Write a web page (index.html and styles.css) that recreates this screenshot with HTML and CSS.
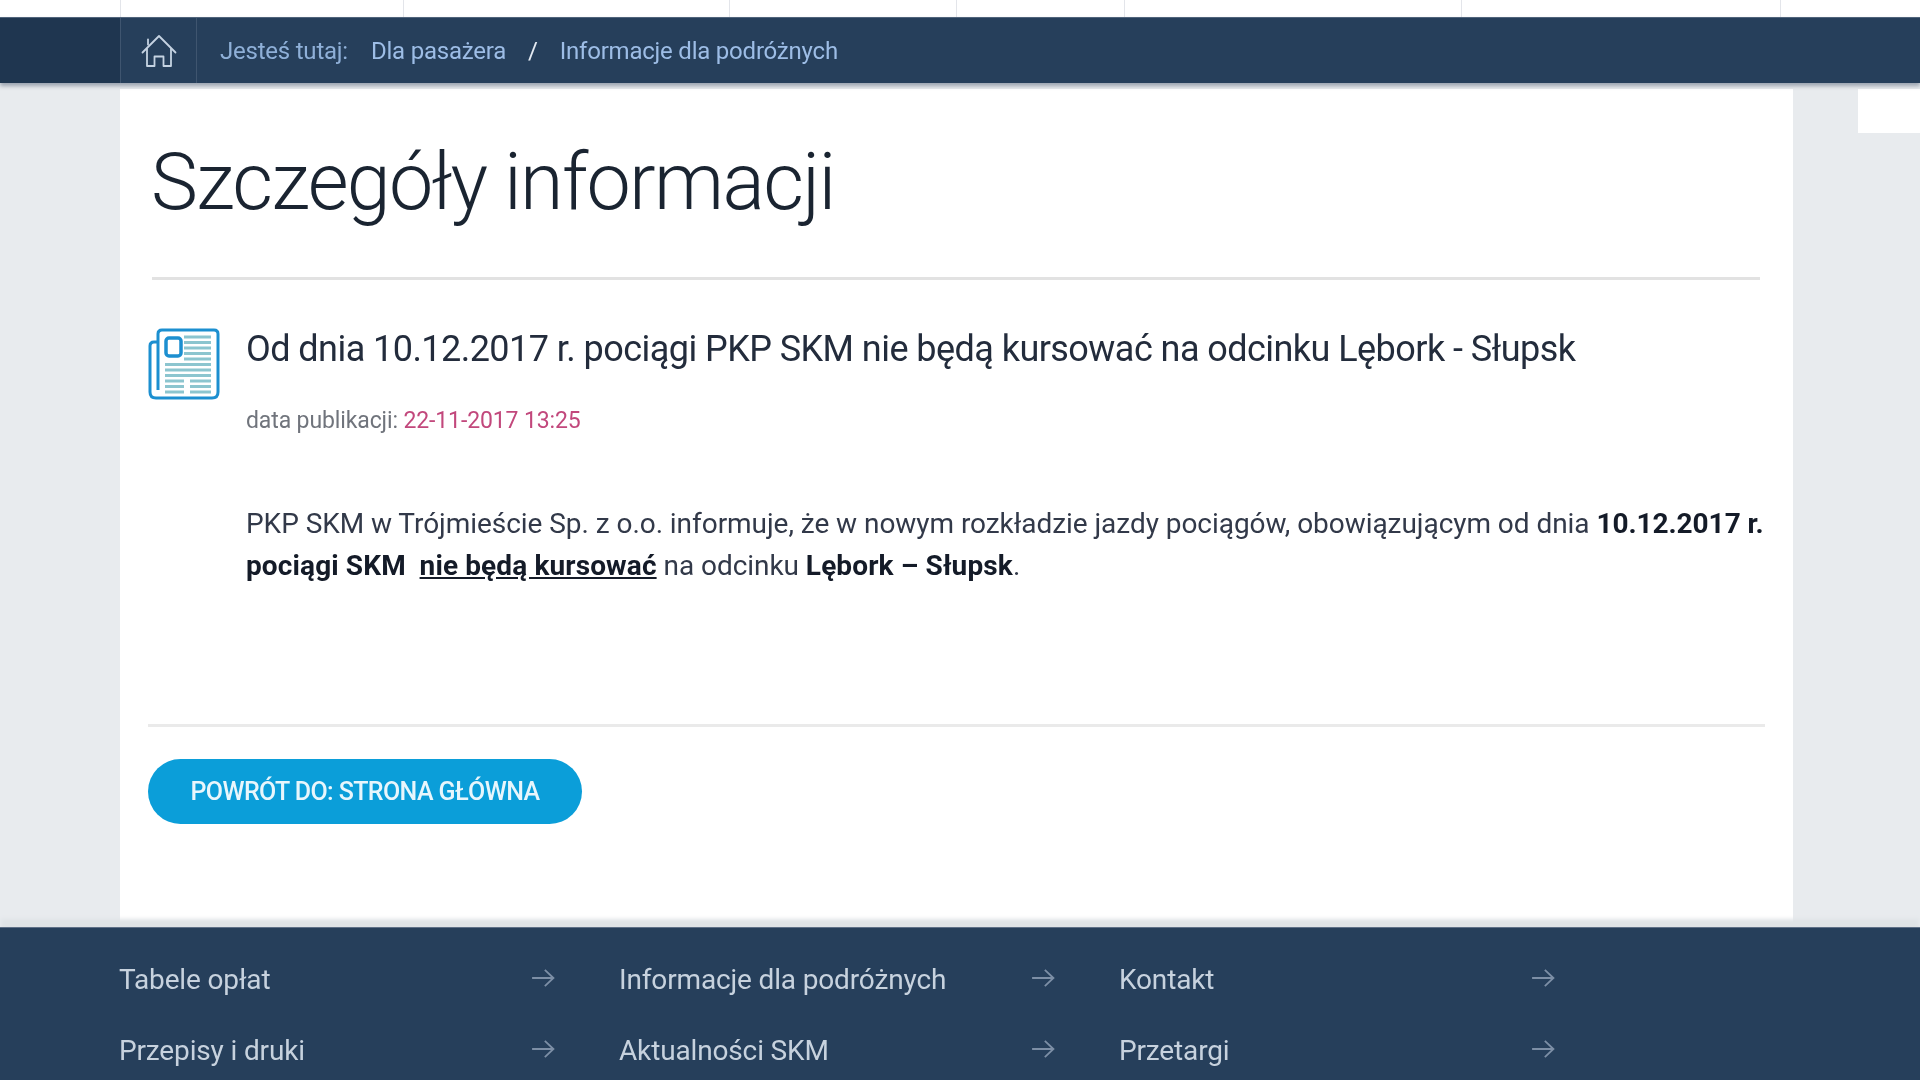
FILE: index.html
```html
<!DOCTYPE html>
<html lang="pl">
<head>
    <meta charset="UTF-8">
    <title>Szczegóły informacji</title>
    <link rel="stylesheet" href="styles.css">
</head>
<body>
    <svg class="defs" width="0" height="0">
        <symbol id="arrow" viewBox="0 0 26 22">
            <path d="M1 11 H24 M15 2 L24.500 11 L15 20" fill="none" stroke="#7d8fa6" stroke-width="2"/>
        </symbol>
    </svg>

    <div class="topbar">
        <span class="top-cell c1"></span>
        <span class="top-cell c2"></span>
        <span class="top-cell c3"></span>
        <span class="top-cell c4"></span>
        <span class="top-cell c5"></span>
        <span class="top-cell c6"></span>
        <span class="top-cell c7"></span>
    </div>

    <nav class="crumbs">
        <a class="home" href="#">
            <svg width="36" height="34" viewBox="0 0 36 34" fill="none" stroke="#c5d3e2" stroke-width="1.8" stroke-linejoin="round" stroke-linecap="round">
                <path d="M1.5 18.5 L18 2 L34.500 18.500"/>
                <path d="M7 5.500 V10.500"/>
                <path d="M6 15 V32 H13.500 V22.500 H22.500 V32 H30 V15"/>
            </svg>
        </a>
        <div class="crumb-text">
            <span class="here">Jesteś tutaj:</span>
            <a href="#">Dla pasażera</a>
            <span class="sep">/</span>
            <a href="#">Informacje dla podróżnych</a>
        </div>
    </nav>

    <div class="page">
        <main class="content">
            <h1>Szczegóły informacji</h1>
            <hr class="rule-top">

            <article class="info">
                <svg class="info-icon" width="72" height="72" viewBox="0 0 72 72" fill="none">
                    <g stroke="#8cc5cf" stroke-width="3.200">
                        <path d="M36 9 H63 M36 14.500 H63 M36 20 H63 M36 25.500 H63 M36 31 H63"/>
                        <path d="M17 36.500 H63 M17 42 H63 M17 47.500 H63"/>
                        <path d="M17 53 H36 M17 58.500 H36 M17 64 H36 M42 53 H63 M42 58.500 H63 M42 64 H63"/>
                    </g>
                    <path d="M10 14 H6 Q2 14 2 18 V64 Q2 70 8 70 H64 Q70 70 70 64 V6 Q70 2 66 2 H14 Q10 2 10 6 V62" stroke="#1c8fd0" stroke-width="3"/>
                    <rect x="18" y="10" width="15" height="18" rx="3" stroke="#1c8fd0" stroke-width="3.500"/>
                </svg>
                <div class="info-body">
                    <h2>Od dnia 10.12.2017 r. pociągi PKP SKM nie będą kursować na odcinku Lębork - Słupsk</h2>
                    <p class="published">data publikacji: <span class="date">22-11-2017 13:25</span></p>
                    <p class="text">PKP SKM w Trójmieście Sp. z o.o. informuje, że w nowym rozkładzie jazdy pociągów, obowiązującym od dnia <b>10.12.2017 r.</b> <b class="wide">pociągi SKM</b>&nbsp; <b class="wide under">nie będą kursować</b> na odcinku <b class="wide">Lębork – Słupsk</b>.</p>
                </div>
            </article>

            <hr class="rule-bottom">
            <a class="back" href="#">POWRÓT DO: STRONA GŁÓWNA</a>
        </main>
        <div class="side"><div class="side-box"></div></div>
    </div>

    <footer class="footer">
        <div class="links">
            <a href="#"><span>Tabele opłat</span><svg class="arr"><use href="#arrow"/></svg></a>
            <a href="#"><span>Informacje dla podróżnych</span><svg class="arr"><use href="#arrow"/></svg></a>
            <a href="#"><span>Kontakt</span><svg class="arr"><use href="#arrow"/></svg></a>
            <a href="#"><span>Przepisy i druki</span><svg class="arr"><use href="#arrow"/></svg></a>
            <a href="#"><span>Aktualności SKM</span><svg class="arr"><use href="#arrow"/></svg></a>
            <a href="#"><span>Przetargi</span><svg class="arr"><use href="#arrow"/></svg></a>
        </div>
    </footer>
</body>
</html>
```

FILE: styles.css
```css
html {
    height: 1080px;
    overflow: hidden;
    background-color: #e8ebee;
}
body {
    margin: 0 -4px; /* keeps the blur from fading at the window edges */
    padding: 0 4px;
    font-family: "Roboto", "Liberation Sans", sans-serif;
    color: #2a3344;
    filter: blur(.65px); /* the source capture is soft */
}

a {
    text-decoration: none;
    color: inherit;
}

.defs {
    display: block;
}

/* top strip */
.topbar {
    display: flex;
    height: 17px;
    background-color: #fff;
    padding-left: 120px;
}
.top-cell {
    border-left: 1px solid #e3e5ea;
    box-sizing: border-box;
}
.c1 { width: 283px; }
.c2 { width: 326px; }
.c3 { width: 227px; }
.c4 { width: 168px; }
.c5 { width: 337px; }
.c6 { width: 319px; }
.c7 { width: 140px; }

/* breadcrumb */
.crumbs {
    display: flex;
    align-items: center;
    height: 66px;
    background: linear-gradient(to right, #1f3650 120px, #263f5b 120px);
    border-top: 1px solid #50647b;
    box-shadow: 0 3px 4px rgba(60, 75, 100, .45);
    padding-left: 120px;
    position: relative;
    box-sizing: border-box;
}
.home {
    display: flex;
    align-items: center;
    justify-content: center;
    width: 77px;
    height: 100%;
    box-sizing: border-box;
    border-left: 1px solid #3f556f;
    border-right: 1px solid #3f556f;
}
.crumb-text {
    display: flex;
    align-items: center;
    margin-left: 23px;
    font-size: 24px;
    letter-spacing: -.22px;
    color: #9dbde6;
}
.here {
    color: #8fb0d8;
    margin-right: 23px;
}
.sep {
    color: #e4ebf3;
    margin: 0 22px;
}

/* main */
.page {
    display: flex;
    height: 844px;
    padding-left: 120px;
    padding-top: 6px;
    box-sizing: border-box;
}
.content {
    width: 1673px;
    height: 838px;
    background-color: #fff;
    padding: 0 28px;
    box-sizing: border-box;
}
.side {
    flex: 1;
    padding-left: 65px;
}
.side-box {
    height: 44px;
    background-color: #fff;
}

h1 {
    margin: 53px 0 0 3px;
    font-size: 79px;
    line-height: 80px;
    font-weight: 300;
    letter-spacing: -1.65px;
    color: #1a2431;
}
.rule-top {
    margin: 55px 5px 0 4px;
    height: 3px;
    border: 0;
    background-color: #e2e2e2;
}
.info {
    display: flex;
    margin-top: 48px;
}
.info-icon {
    flex: none;
    margin-right: 26px;
}
.info-body {
    margin-top: -2px;
    flex: 1;
}
h2 {
    margin: 0;
    font-size: 36px;
    line-height: 46px;
    font-weight: 400;
    letter-spacing: -.55px;
    color: #232c3c;
    white-space: nowrap;
}
.published {
    margin: 35px 0 0;
    font-size: 23px;
    line-height: 28px;
    letter-spacing: -.12px;
    color: #70747c;
}
.date {
    color: #c2487c;
}
.text {
    margin: 68px 0 0;
    font-size: 28px;
    line-height: 42px;
    letter-spacing: -.05px;
    color: #323949;
    width: 1530px;
}
.text b {
    color: #141b28;
    font-weight: 700;
}
.text .wide {
    letter-spacing: .12px;
}
.text .under {
    text-decoration: underline;
}
.rule-bottom {
    margin: 137px 0 0;
    height: 3px;
    border: 0;
    background-color: #eaeaea;
}
.back {
    display: inline-block;
    margin-top: 32px;
    width: 434px;
    height: 65px;
    line-height: 65px;
    text-align: center;
    border-radius: 33px;
    background-color: #0b9ed9;
    color: #e8f6fc;
    font-size: 25px;
    font-weight: 500;
    letter-spacing: -.6px;
}

/* footer */
.footer {
    height: 163px;
    background-color: #263f5b;
    border-top: 1px solid #5e7087;
    box-shadow: 0 -9px 4px -1px #dfe3e6;
    padding: 16px 0 0 119px;
    box-sizing: border-box;
    position: relative;
}
.links {
    display: grid;
    grid-template-columns: repeat(3, 500px);
    grid-auto-rows: 71px;
}
.links a {
    display: flex;
    align-items: center;
    justify-content: space-between;
    width: 436px;
    font-size: 28px;
    letter-spacing: -.15px;
    color: #c7d2de;
}
.arr {
    width: 24px;
    height: 20px;
    margin-top: -3px;
}
```
